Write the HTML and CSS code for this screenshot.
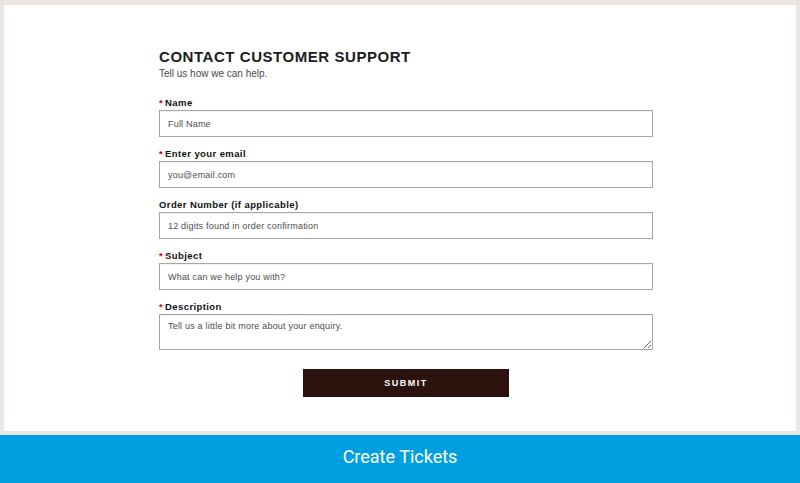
FILE: index.html
```html
<!DOCTYPE html>
<html>
<head>
<meta charset="utf-8">
<link rel="stylesheet" href="styles.css">
</head>
<body>
<div class="frame">
  <div class="panel">
    <form class="form">
      <h1 class="title">CONTACT CUSTOMER SUPPORT</h1>
      <p class="subtitle">Tell us how we can help.</p>
      <div class="field">
        <label class="label"><span class="req">*</span>Name</label>
        <input class="input" type="text" placeholder="Full Name">
      </div>
      <div class="field">
        <label class="label"><span class="req">*</span>Enter your email</label>
        <input class="input" type="text" placeholder="you@email.com">
      </div>
      <div class="field">
        <label class="label">Order Number (if applicable)</label>
        <input class="input" type="text" placeholder="12 digits found in order confirmation">
      </div>
      <div class="field">
        <label class="label"><span class="req">*</span>Subject</label>
        <input class="input" type="text" placeholder="What can we help you with?">
      </div>
      <div class="field">
        <label class="label"><span class="req">*</span>Description</label>
        <textarea class="input textarea" placeholder="Tell us a little bit more about your enquiry."></textarea>
      </div>
      <div class="actions">
        <button class="submit" type="button">SUBMIT</button>
      </div>
    </form>
  </div>
</div>
<div class="bar"><span class="bar-text">Create Tickets</span></div>
</body>
</html>
```

FILE: styles.css
```css
* { box-sizing: border-box; }
html, body { margin: 0; padding: 0; }
body {
  width: 800px;
  height: 483px;
  overflow: hidden;
  font-family: "Liberation Sans", Arial, sans-serif;
  background: #ffffff;
}
.frame {
  background: #ebe5e3;
  padding: 5px 4px 4px 4px;
  height: 435px;
}
.panel {
  background: #ffffff;
  height: 426px;
  padding: 43px 0 0 155px;
}
.form {
  width: 494px;
}
.title {
  margin: 0;
  font-size: 15px;
  line-height: 18px;
  font-weight: bold;
  letter-spacing: 0.55px;
  color: #1c1c1c;
}
.subtitle {
  margin: 1px 0 15px 0;
  font-size: 10px;
  line-height: 14px;
  letter-spacing: 0;
  color: #4a4a4a;
}
.field {
  margin-bottom: 10px;
}
.label {
  display: block;
  font-size: 9.5px;
  line-height: 14px;
  font-weight: bold;
  letter-spacing: 0.4px;
  color: #111111;
}
.req {
  color: #d0021b;
  margin-right: 2px;
}
.input {
  display: block;
  width: 494px;
  height: 27px;
  margin: 0;
  border: 1px solid #a6a6a6;
  box-shadow: inset 0 1px 1px rgba(0,0,0,0.06);
  padding: 0 8px;
  font-family: "Liberation Sans", Arial, sans-serif;
  font-size: 9px;
  letter-spacing: 0.2px;
  color: #333;
  background: #fff;
  outline: none;
}
.input::placeholder {
  color: #4d4d4d;
}
.textarea {
  height: 36px;
  padding: 6px 8px;
  resize: vertical;
}
.actions {
  display: flex;
  justify-content: center;
  padding-top: 9px;
}
.submit {
  width: 206px;
  height: 28px;
  border: none;
  background: #2b120d;
  color: #ffffff;
  font-family: "Liberation Sans", Arial, sans-serif;
  font-size: 9px;
  font-weight: bold;
  letter-spacing: 1.5px;
  padding: 0;
}
.bar {
  height: 48px;
  background: #00a0e0;
  display: flex;
  align-items: center;
  justify-content: center;
}
.bar-text {
  display: inline-block;
  font-family: Roboto, "Liberation Sans", sans-serif;
  font-size: 18px;
  line-height: 20px;
  color: #ffffff;
  margin-top: -4px;
}
```
